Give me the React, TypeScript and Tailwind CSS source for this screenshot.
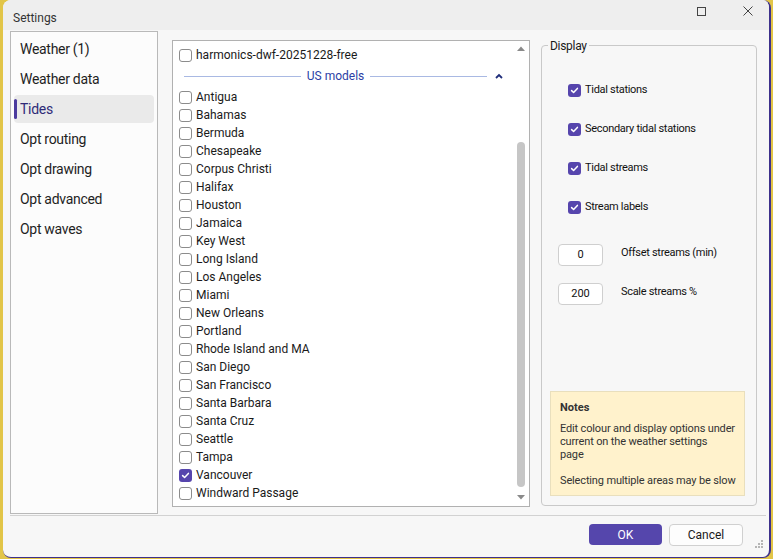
import React from "react";

const FONT = { fontFamily: "Roboto, 'Noto Sans', sans-serif" };

function Box({ checked }: { checked?: boolean }) {
  if (checked) {
    return (
      <span className="w-[13px] h-[13px] rounded-[3px] bg-[#5645ad] flex items-center justify-center shrink-0">
        <svg width="9" height="9" viewBox="0 0 9 9">
          <path d="M1.6 4.6 L3.6 6.5 L7.4 2.4" fill="none" stroke="#fff" strokeWidth="1.5" strokeLinecap="round" strokeLinejoin="round" />
        </svg>
      </span>
    );
  }
  return <span className="w-[13px] h-[13px] rounded-[3px] border border-[#8c8c8c] bg-white shrink-0" />;
}

const places = [
  "Antigua",
  "Bahamas",
  "Bermuda",
  "Chesapeake",
  "Corpus Christi",
  "Halifax",
  "Houston",
  "Jamaica",
  "Key West",
  "Long Island",
  "Los Angeles",
  "Miami",
  "New Orleans",
  "Portland",
  "Rhode Island and MA",
  "San Diego",
  "San Francisco",
  "Santa Barbara",
  "Santa Cruz",
  "Seattle",
  "Tampa",
  "Vancouver",
  "Windward Passage",
];

const nav = ["Weather (1)", "Weather data", "Tides", "Opt routing", "Opt drawing", "Opt advanced", "Opt waves"];

export default function App() {
  return (
    <div className="w-[773px] h-[559px] bg-[#e2c548] overflow-hidden flex" style={FONT}>
      <div className="ml-[3px] w-[768px] h-[558px] rounded-[8px] bg-[#f7f7f7] border-r-2 border-b border-[#3e318c] overflow-hidden flex flex-col">
        {/* title bar */}
        <div className="h-[30px] bg-[#eeeeee] flex items-start shrink-0">
          <span className="ml-[10px] mt-[11px] leading-[14px] text-[12px] text-[#333]">Settings</span>
          <div className="ml-auto flex items-start">
            <span className="mt-[7px] w-[9px] h-[9px] border border-[#444] mr-[37px]" />
            <svg width="10" height="10" viewBox="0 0 10 10" className="mt-[6px] mr-[16px]">
              <path d="M0.5 0.5 L9.5 9.5 M9.5 0.5 L0.5 9.5" stroke="#444" strokeWidth="1" />
            </svg>
          </div>
        </div>

        {/* main */}
        <div className="h-[485px] flex items-start shrink-0">
          {/* nav */}
          <div className="ml-[7px] mt-[1px] w-[148px] h-[483px] border border-[#b9b9b9] bg-[#fcfcfc] pt-[3px] px-[3px] flex flex-col gap-[2px]">
            {nav.map((n) => {
              const sel = n === "Tides";
              return (
                <div
                  key={n}
                  className={
                    "h-[28px] flex items-center rounded-[4px] relative pl-[6px] text-[14px] tracking-[-0.3px] " +
                    (sel ? "bg-[#eaeaea] text-[#2f2a78]" : "text-[#1f1f1f]")
                  }
                >
                  {sel && <span className="absolute left-0 top-[4px] w-[3px] h-[20px] rounded-[2px] bg-[#4b3b9e]" />}
                  {n}
                </div>
              );
            })}
          </div>

          {/* list */}
          <div className="ml-[14px] mt-[10px] w-[358px] h-[467px] border border-[#b1b1b1] bg-white flex">
            <div className="flex-1 pt-[5px] pl-[6px]">
              <div className="h-[18px] flex items-center gap-[4px] text-[12px] text-[#1a1a1a]">
                <Box />
                <span>harmonics-dwf-20251228-free</span>
              </div>
              <div className="h-[24px] flex items-center pl-[5px] pr-[11px]">
                <span className="flex-1 h-px bg-[#a9b9e3]" />
                <span className="px-[6px] text-[12px] text-[#2b3ea5]">US models</span>
                <span className="flex-1 h-px bg-[#a9b9e3]" />
                <svg width="8" height="6" viewBox="0 0 8 6" className="ml-[8px]">
                  <path d="M1 5 L4 2 L7 5" fill="none" stroke="#1f2d7a" strokeWidth="1.8" />
                </svg>
              </div>
              {places.map((p) => (
                <div key={p} className="h-[18px] flex items-center gap-[4px] text-[12px] text-[#1a1a1a]">
                  <Box checked={p === "Vancouver"} />
                  <span>{p}</span>
                </div>
              ))}
            </div>
            <div className="w-[14px] mr-[1px] flex flex-col items-center">
              <svg width="8" height="5" viewBox="0 0 8 5" className="mt-[5px]">
                <path d="M0 5 L4 0.5 L8 5 Z" fill="#8a8a8a" />
              </svg>
              <div className="mt-[91px] w-[8px] h-[345px] rounded-[4px] bg-[#c6c6c6]" />
              <svg width="8" height="5" viewBox="0 0 8 5" className="mt-[8px]">
                <path d="M0 0 L8 0 L4 4.5 Z" fill="#8a8a8a" />
              </svg>
            </div>
          </div>

          {/* display group */}
          <div className="ml-[11px] mt-[15px] w-[216px] h-[461px] border border-[#c9c9c9] rounded-[4px] relative flex flex-col">
            <span className="absolute -top-[8px] left-[6px] px-[2px] bg-[#f7f7f7] text-[12px] text-[#1a1a1a] leading-[16px] tracking-[-0.3px]">
              Display
            </span>
            <div className="pt-[36px] pl-[26px] flex flex-col gap-[23px]">
              {["Tidal stations", "Secondary tidal stations", "Tidal streams", "Stream labels"].map((t) => (
                <div key={t} className="h-[16px] flex items-center gap-[4px]">
                  <Box checked />
                  <span className="text-[11px] tracking-[-0.3px] text-[#111]">{t}</span>
                </div>
              ))}
            </div>
            <div className="mt-[29px] pl-[16px] flex flex-col gap-[17px]">
              {[
                ["0", "Offset streams (min)"],
                ["200", "Scale streams %"],
              ].map(([v, l]) => (
                <div key={l} className="flex items-start">
                  <div className="w-[45px] h-[22px] rounded-[4px] border border-[#cfcfcf] bg-white flex items-center justify-center text-[11px] text-[#111]">
                    {v}
                  </div>
                  <span className="ml-[18px] mt-[2px] leading-[14px] text-[11px] tracking-[-0.3px] text-[#111]">{l}</span>
                </div>
              ))}
            </div>
            <div className="mt-auto mb-[9px] ml-[8px] w-[195px] h-[105px] bg-[#fff2cc] border border-[#e9dfbd] pt-[9px] pl-[9px] text-[#333] whitespace-nowrap">
              <div className="text-[11px] font-bold leading-[14px]">Notes</div>
              <div className="mt-[7px] text-[11px] leading-[13px] tracking-[-0.15px]">
                Edit colour and display options under
                <br />
                current on the weather settings
                <br />
                page
              </div>
              <div className="mt-[13px] text-[11px] leading-[13px] tracking-[-0.15px]">Selecting multiple areas may be slow</div>
            </div>
          </div>
        </div>

        {/* bottom */}
        <div className="ml-[7px] mr-[3px] border-t border-[#d2d2d2]" />
        <div className="flex-1 relative flex justify-end items-start pt-[8px] pr-[26px] gap-[7px]">
          <button className="w-[73px] h-[21px] rounded-[4px] bg-[#5546ac] text-white text-[12px] flex items-center justify-center">
            OK
          </button>
          <button className="w-[74px] h-[22px] rounded-[4px] border border-[#d0d0d0] bg-[#fdfdfd] text-[#1a1a1a] text-[12px] flex items-center justify-center">
            Cancel
          </button>
          <svg width="9" height="9" viewBox="0 0 9 9" className="absolute right-[5px] bottom-[8px]">
            <rect x="6" y="0" width="2" height="2" fill="#b5b5b5" />
            <rect x="3" y="3" width="2" height="2" fill="#b5b5b5" />
            <rect x="6" y="3" width="2" height="2" fill="#b5b5b5" />
            <rect x="0" y="6" width="2" height="2" fill="#b5b5b5" />
            <rect x="3" y="6" width="2" height="2" fill="#b5b5b5" />
            <rect x="6" y="6" width="2" height="2" fill="#b5b5b5" />
          </svg>
        </div>
      </div>
    </div>
  );
}
